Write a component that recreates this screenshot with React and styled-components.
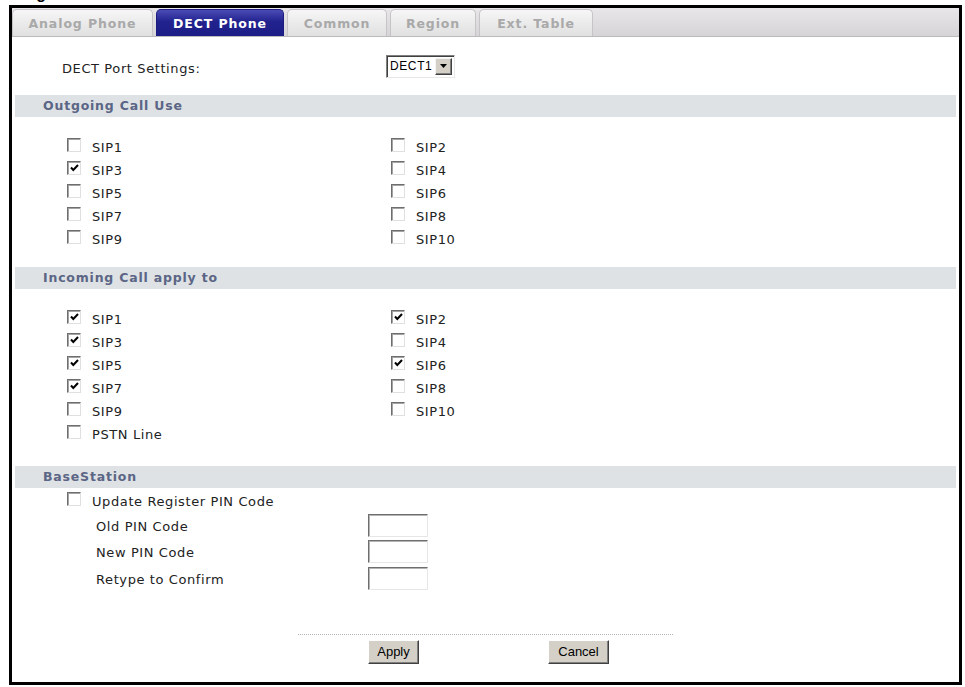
import React from 'react';
import styled, { createGlobalStyle } from 'styled-components';

const GlobalStyle = createGlobalStyle`
  html, body { margin: 0; padding: 0; background: #fff; }
  body { font-family: "DejaVu Sans", Verdana, sans-serif; }
`;

const Caption = styled.div` height: 5px; overflow: hidden; padding-left: 22px; `;
const CaptionText = styled.div` margin-top: -14px; font: bold 16px/16px "Liberation Sans", Arial, sans-serif; color: #000; `;

const Frame = styled.div` margin-left: 9px; width: 953px; height: 680px; box-sizing: border-box; border: 3px solid #000; background: #fff; display: flex; flex-direction: column; `;

const TabBar = styled.div` height: 28px; border-bottom: 1px solid #bcbabc; background: linear-gradient(#e8e6e8, #d6d4d6); display: flex; align-items: flex-end; gap: 3px; `;
const Tab = styled.div`
  width: ${({ $w }) => $w}px; height: 27px; box-sizing: border-box; display: flex; align-items: center; justify-content: center;
  border-radius: 5px 5px 0 0; font-size: 12.5px; font-weight: bold; letter-spacing: 0.9px;
  border: 1px solid ${({ $active }) => ($active ? '#1c1c80' : '#c6c4c6')}; border-bottom: none;
  background: ${({ $active }) => ($active ? 'linear-gradient(#4b4bb6, #22228f 45%, #1d1d86)' : 'linear-gradient(#f6f6f6, #e0e0e0)')};
  color: ${({ $active }) => ($active ? '#fff' : '#a9a9a9')};
`;

const Content = styled.div` flex: 1; display: flex; flex-direction: column; `;

const PortRow = styled.div` height: 58px; display: flex; align-items: center; padding-left: 50px; font-size: 13px; letter-spacing: 0.6px; color: #222; `;
const PortLabel = styled.div` width: 324px; padding-top: 4px; `;

const Select = styled.div` width: 69px; height: 23px; box-sizing: border-box; display: flex; align-items: center; justify-content: space-between; padding: 0 2px 0 3px; background: #fff; border: 1px solid; border-color: #808080 #e8e8e8 #e8e8e8 #808080; box-shadow: inset 1px 1px 0 #404040; font: 12px "Liberation Sans", Arial, sans-serif; color: #000; `;
const SelectButton = styled.div` width: 17px; height: 17px; box-sizing: border-box; display: flex; align-items: center; justify-content: center; background: #d4d0c8; border: 1px solid; border-color: #f4f4f4 #404040 #404040 #f4f4f4; box-shadow: inset -1px -1px 0 #808080; `;

const Band = styled.div` margin: 0 3px; height: 22px; line-height: 22px; padding-left: 28px; background: #dee2e4; color: #5b6585; font-size: 12.5px; font-weight: bold; letter-spacing: 0.8px; `;

const CheckGrid = styled.div` display: grid; grid-template-columns: 324px 1fr; grid-auto-rows: 23px; padding: ${({ $pad }) => $pad}; padding-left: 54px; `;
const CheckItem = styled.label` display: flex; align-items: center; font-size: 13px; letter-spacing: 0.6px; color: #222; `;
const Box = styled.span` width: 14px; height: 14px; box-sizing: border-box; margin: 0 11px 3px 1px; display: inline-flex; align-items: center; justify-content: center; background: #fff; border: 1px solid; border-color: #6e6e6e #e0e0e0 #e0e0e0 #6e6e6e; box-shadow: inset 1px 1px 0 #a4a4a4; `;
const ItemText = styled.span` padding-top: 2px; `;

const PinRow = styled.div` height: 26.5px; display: flex; align-items: center; padding-left: 84px; font-size: 13px; letter-spacing: 0.6px; color: #222; `;
const PinLabel = styled.div` width: 272px; padding-top: 2px; `;
const TextInput = styled.div` width: 60px; height: 23px; box-sizing: border-box; background: #fff; border: 1px solid; border-color: #6e6e6e #e6e6e6 #e6e6e6 #6e6e6e; box-shadow: inset 1px 1px 0 #b4b4b4; `;

const Footer = styled.div` margin-top: 42px; `;
const Divider = styled.div` margin-left: 286px; width: 375px; border-top: 1px dotted #b4b4b4; `;
const ButtonRow = styled.div` display: flex; margin-top: 5px; padding-left: 356px; gap: 129px; `;
const Button = styled.button` width: ${({ $w }) => $w}px; height: 24px; padding: 0; background: #d4d0c8; border: 1px solid; border-color: #fff #404040 #404040 #fff; box-shadow: inset -1px -1px 0 #808080; font: 13px "Liberation Sans", Arial, sans-serif; color: #000; `;

const Check = () => (
    <svg width="9" height="8" viewBox="0 0 9 8">
        <path d="M1 3.5 L3.3 6 L8 1" fill="none" stroke="#000" strokeWidth="2" />
    </svg>
);

const CheckBox = ({ label, checked }) => (
    <CheckItem>
        <Box>{checked && <Check />}</Box>
        <ItemText>{label}</ItemText>
    </CheckItem>
);

const tabs = [
    { name: 'Analog Phone', w: 141 },
    { name: 'DECT Phone', w: 128, active: true },
    { name: 'Common', w: 100 },
    { name: 'Region', w: 86 },
    { name: 'Ext. Table', w: 114 },
];

const outgoing = [false, false, true, false, false, false, false, false, false, false];
const incoming = [true, true, true, false, true, true, true, false, false, false];

const App = () => (
    <>
        <GlobalStyle />
        <Caption><CaptionText>Figure</CaptionText></Caption>
        <Frame>
            <TabBar>
                {tabs.map((t) => <Tab key={t.name} $w={t.w} $active={t.active}>{t.name}</Tab>)}
            </TabBar>
            <Content>
                <PortRow>
                    <PortLabel>DECT Port Settings:</PortLabel>
                    <Select>
                        <span>DECT1</span>
                        <SelectButton>
                            <svg width="7" height="4" viewBox="0 0 7 4"><path d="M0 0 H7 L3.5 4 Z" fill="#000" /></svg>
                        </SelectButton>
                    </Select>
                </PortRow>

                <Band>Outgoing Call Use</Band>
                <CheckGrid $pad="18px 0 17px">
                    {outgoing.map((c, i) => <CheckBox key={i} label={`SIP${i + 1}`} checked={c} />)}
                </CheckGrid>

                <Band>Incoming Call apply to</Band>
                <CheckGrid $pad="18px 0 21px">
                    {incoming.map((c, i) => <CheckBox key={i} label={`SIP${i + 1}`} checked={c} />)}
                    <CheckBox label="PSTN Line" />
                </CheckGrid>

                <Band>BaseStation</Band>
                <CheckGrid $pad="1px 0 0">
                    <CheckBox label="Update Register PIN Code" />
                </CheckGrid>
                {['Old PIN Code', 'New PIN Code', 'Retype to Confirm'].map((l) => (
                    <PinRow key={l}>
                        <PinLabel>{l}</PinLabel>
                        <TextInput />
                    </PinRow>
                ))}

                <Footer>
                    <Divider />
                    <ButtonRow>
                        <Button $w={51}>Apply</Button>
                        <Button $w={61}>Cancel</Button>
                    </ButtonRow>
                </Footer>
            </Content>
        </Frame>
    </>
);

export default App;
